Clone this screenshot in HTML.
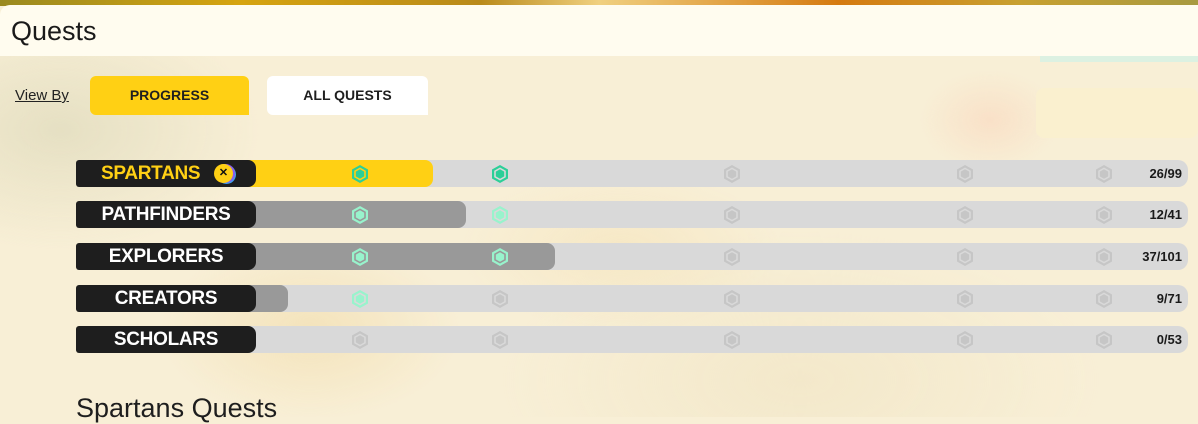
<!DOCTYPE html>
<html><head><style>
*{margin:0;padding:0;box-sizing:border-box}
body{width:1198px;height:417px;overflow:hidden;position:relative;font-family:"Liberation Sans",sans-serif;
background:
radial-gradient(ellipse 200px 120px at 60px 130px,rgba(225,220,190,.8),transparent),
radial-gradient(ellipse 150px 90px at 310px 330px,rgba(240,215,160,.5),transparent),
radial-gradient(ellipse 160px 80px at 620px 250px,rgba(245,225,180,.5),transparent),
radial-gradient(ellipse 70px 50px at 990px 120px,rgba(250,215,190,.6),transparent),
radial-gradient(ellipse 300px 150px at 800px 380px,rgba(240,228,195,.6),transparent),
#f8efd6;}
.top{position:absolute;left:0;top:0;width:1198px;height:6px;background:linear-gradient(90deg,#9a8a20,#d6a410 20%,#b98a1a 40%,#f0d080 50%,#d57a10 70%,#c8a030 85%,#a89a40)}
.hdr{position:absolute;left:0;top:5px;width:1198px;height:51px;background:#fffcef;border-top-left-radius:10px}
.hdr h1{position:absolute;left:11px;top:11px;font-weight:400;font-size:27px;color:#1a1a1a}
.lead{position:absolute;left:1036px;top:88px;width:162px;height:50px;background:#faf0cf;border-radius:8px}
.teal{position:absolute;left:1040px;top:56px;width:158px;height:6px;background:#dcf1e2}
.vb{position:absolute;left:15px;top:87px;font-size:15px;color:#222;text-decoration:underline}
.btn{position:absolute;top:76px;height:39px;font-weight:700;font-size:14px;text-align:center;line-height:39px;color:#1f1f1f;border-radius:6px 6px 0 6px}
.row{position:absolute;left:76px;width:1112px;height:27px}
.bar{position:absolute;left:170px;top:0;right:0;height:27px;background:#d9d9d9;border-radius:0 10px 10px 0}
.fill{position:absolute;left:170px;top:0;height:27px;border-radius:0 8px 8px 0}
.lab{position:absolute;left:0;top:0;width:180px;height:27px;background:#1e1e1e;border-radius:3px 8px 8px 3px;color:#fff;font-weight:700;font-size:19px;text-align:center;line-height:27px;white-space:nowrap;letter-spacing:-0.3px}
.cnt{position:absolute;right:6px;top:0;line-height:27px;font-size:13px;font-weight:700;color:#1a1a1a}
.g{position:absolute;top:4px;width:20px;height:20px}
.ic{position:absolute;left:138px;top:4px;width:19px;height:19px;border-radius:50%;background:#ffd014;box-shadow:2px 0 0 #8a5cf0,3px 1px 0 #3fa0f0;font-size:11px;color:#111;text-align:center;line-height:19px;letter-spacing:0}
h2{position:absolute;left:76px;top:393px;font-weight:400;font-size:27px;color:#1e1e1e}
</style></head><body>
<div class="top"></div>
<div class="teal"></div><div class="lead"></div>
<div class="hdr"><h1>Quests</h1></div>
<div class="vb">View By</div>
<div class="btn" style="left:90px;width:159px;background:#ffd014">PROGRESS</div>
<div class="btn" style="left:267px;width:161px;background:#fff">ALL QUESTS</div>

<svg width="0" height="0" style="position:absolute"><defs>
<symbol id="gem" viewBox="0 0 20 20"><path d="M10 1 L18 5.5 V14.5 L10 19 L2 14.5 V5.5 Z M10 3.5 L4.2 6.8 V13.2 L10 16.5 L15.8 13.2 V6.8 Z" fill-rule="evenodd" fill="currentColor"/><path d="M10 5.2 L14.2 7.6 V12.4 L10 14.8 L5.8 12.4 V7.6 Z" fill="currentColor"/></symbol>
</defs></svg>

<div class="row" style="top:160px"><div class="bar"></div><div class="fill" style="width:187px;background:#ffd014"></div>
<div class="lab" style="color:#ffd014;text-align:left;padding-left:25px">SPARTANS<span class="ic">✕</span></div>
<svg class="g" style="left:274px;color:#2ccf98"><use href="#gem"/></svg><svg class="g" style="left:414px;color:#2ccf98"><use href="#gem"/></svg><svg class="g" style="left:646px;color:#c6c6c6"><use href="#gem"/></svg><svg class="g" style="left:879px;color:#c6c6c6"><use href="#gem"/></svg><svg class="g" style="left:1018px;color:#c6c6c6"><use href="#gem"/></svg><div class="cnt">26/99</div></div>

<div class="row" style="top:201px"><div class="bar"></div><div class="fill" style="width:220px;background:#999"></div><div class="lab">PATHFINDERS</div>
<svg class="g" style="left:274px;color:#98f3cc"><use href="#gem"/></svg><svg class="g" style="left:414px;color:#98f3cc"><use href="#gem"/></svg><svg class="g" style="left:646px;color:#c6c6c6"><use href="#gem"/></svg><svg class="g" style="left:879px;color:#c6c6c6"><use href="#gem"/></svg><svg class="g" style="left:1018px;color:#c6c6c6"><use href="#gem"/></svg><div class="cnt">12/41</div></div>

<div class="row" style="top:243px"><div class="bar"></div><div class="fill" style="width:309px;background:#999"></div><div class="lab">EXPLORERS</div>
<svg class="g" style="left:274px;color:#98f3cc"><use href="#gem"/></svg><svg class="g" style="left:414px;color:#98f3cc"><use href="#gem"/></svg><svg class="g" style="left:646px;color:#c6c6c6"><use href="#gem"/></svg><svg class="g" style="left:879px;color:#c6c6c6"><use href="#gem"/></svg><svg class="g" style="left:1018px;color:#c6c6c6"><use href="#gem"/></svg><div class="cnt">37/101</div></div>

<div class="row" style="top:285px"><div class="bar"></div><div class="fill" style="width:42px;background:#999"></div><div class="lab">CREATORS</div>
<svg class="g" style="left:274px;color:#98f3cc"><use href="#gem"/></svg><svg class="g" style="left:414px;color:#c6c6c6"><use href="#gem"/></svg><svg class="g" style="left:646px;color:#c6c6c6"><use href="#gem"/></svg><svg class="g" style="left:879px;color:#c6c6c6"><use href="#gem"/></svg><svg class="g" style="left:1018px;color:#c6c6c6"><use href="#gem"/></svg><div class="cnt">9/71</div></div>

<div class="row" style="top:326px"><div class="bar"></div><div class="lab">SCHOLARS</div>
<svg class="g" style="left:274px;color:#c6c6c6"><use href="#gem"/></svg><svg class="g" style="left:414px;color:#c6c6c6"><use href="#gem"/></svg><svg class="g" style="left:646px;color:#c6c6c6"><use href="#gem"/></svg><svg class="g" style="left:879px;color:#c6c6c6"><use href="#gem"/></svg><svg class="g" style="left:1018px;color:#c6c6c6"><use href="#gem"/></svg><div class="cnt">0/53</div></div>

<h2>Spartans Quests</h2>
</body></html>
